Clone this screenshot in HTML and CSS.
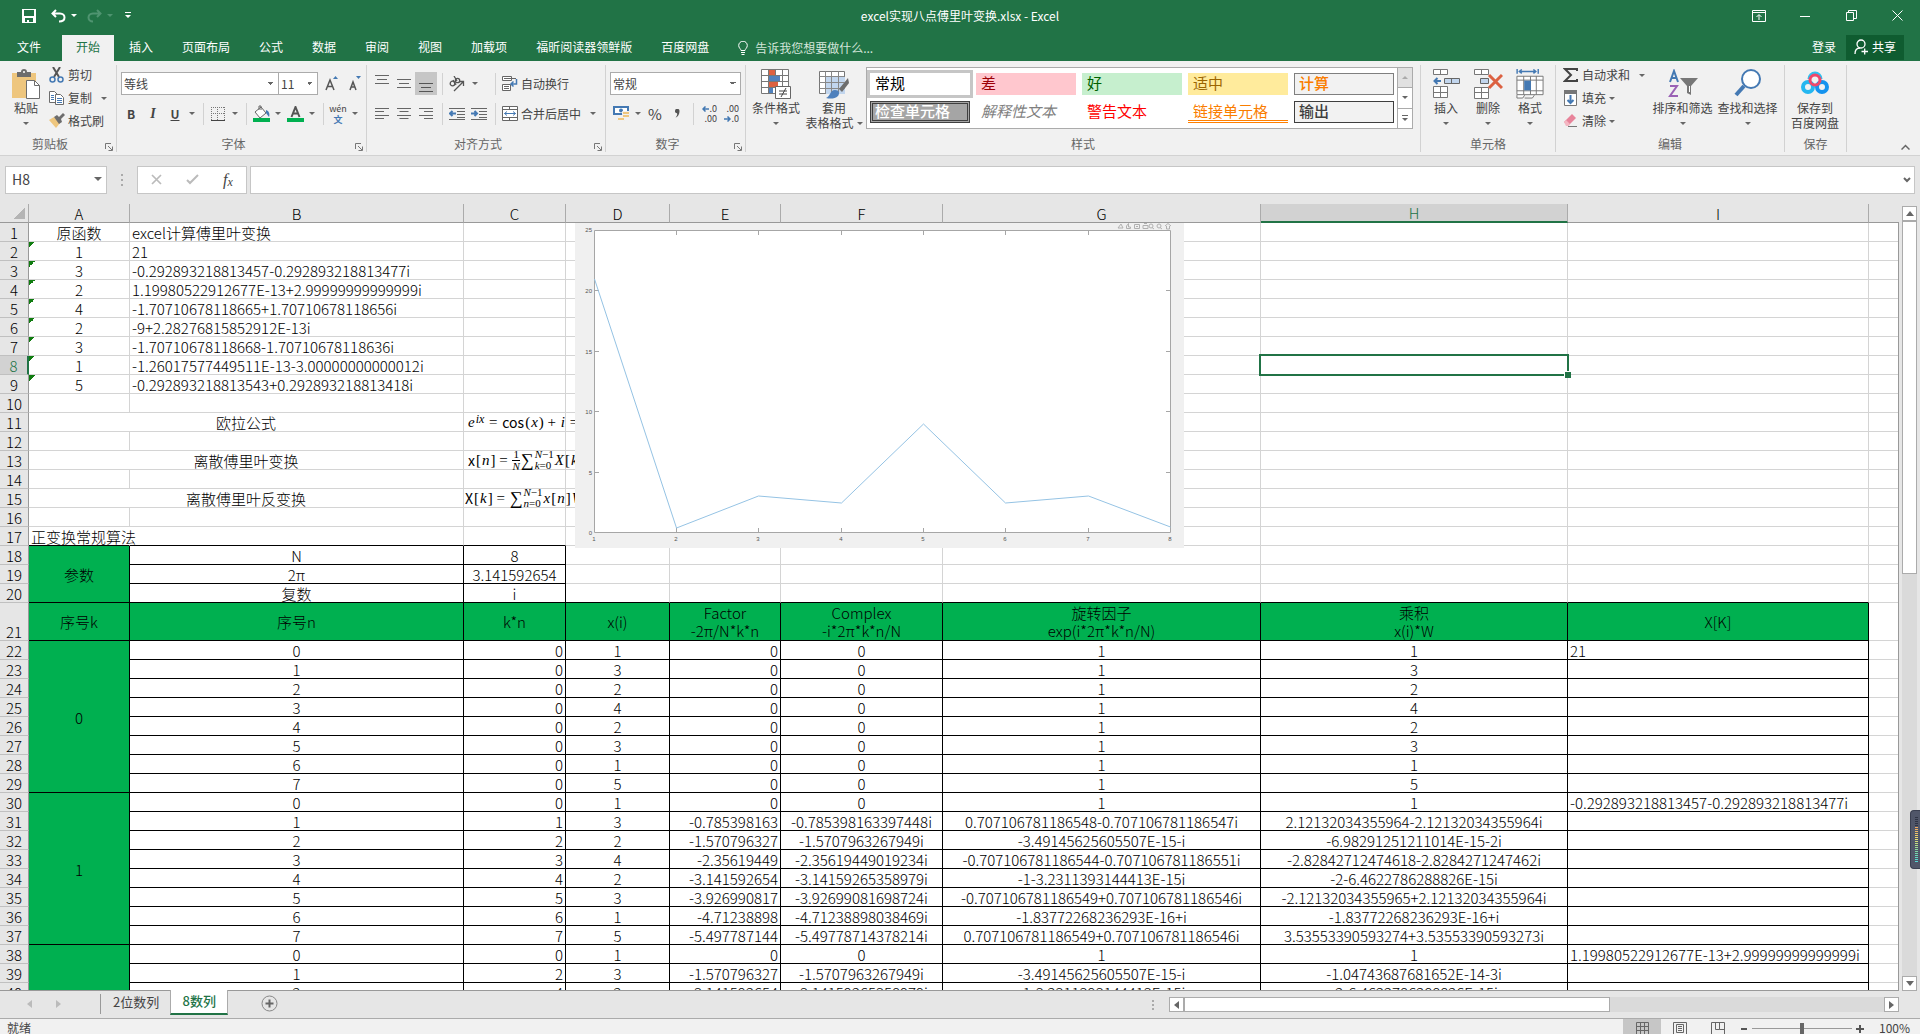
FILE: index.html
```html
<!DOCTYPE html>
<html lang="zh-CN">
<head>
<meta charset="utf-8">
<title>excel实现八点傅里叶变换.xlsx - Excel</title>
<link rel="stylesheet" href="styles.css">
</head>
<body>
<header class="titlebar">
  <div class="quick">
    <button class="q-save" aria-label="保存"><svg width="14" height="14" viewBox="0 0 14 14"><path fill="#fff" fill-rule="evenodd" d="M0 0h14v14H0zM2 1v6h10V1zM3 9v4h2v-2h2v2h4V9z"/></svg></button>
    <button class="q-undo" aria-label="撤销"><svg width="15" height="14" viewBox="0 0 15 14"><path fill="none" stroke="#fff" stroke-width="2" d="M5 1 1.500 4.500 5 8M2 4.500h7c3 0 4.500 2 4.500 4S12 12.500 8 12.500"/></svg><i class="caret light"></i></button>
    <button class="q-redo" aria-label="恢复"><svg width="15" height="14" viewBox="0 0 15 14"><path fill="none" stroke="#4f9470" stroke-width="2" d="m10 1 3.500 3.500L10 8M13 4.500H6c-3 0-4.500 2-4.500 4S3 12.500 6 12.500"/></svg><i class="caret dim"></i></button>
    <button class="q-more" aria-label="自定义"><svg width="6" height="7" viewBox="0 0 6 7"><path fill="#fff" d="M0 0h6v1H0zM0 3h6L3 6z"/></svg></button>
  </div>
  <h1 class="title">excel实现八点傅里叶变换.xlsx - Excel</h1>
  <div class="window">
    <button aria-label="功能区显示选项"><svg width="14" height="12" viewBox="0 0 14 12"><path fill="none" stroke="#fff" d="M.5.5h13v11H.5zM.5 2.500h13M7 10V5M4.500 7 7 4.500 9.500 7"/></svg></button>
    <button aria-label="最小化"><svg width="10" height="12" viewBox="0 0 10 12"><path stroke="#fff" d="M0 6.500h10"/></svg></button>
    <button aria-label="还原"><svg width="11" height="11" viewBox="0 0 11 11"><path fill="none" stroke="#fff" d="M.5 2.500h7v8h-7zM2.500 2.500v-2h8v8h-3"/></svg></button>
    <button aria-label="关闭"><svg width="11" height="11" viewBox="0 0 11 11"><path stroke="#fff" d="m.5.5 10 10M10.500.5l-10 10"/></svg></button>
  </div>
</header>
<nav class="tabs">
  <button class="file">文件</button>
  <button class="active">开始</button>
  <button>插入</button>
  <button>页面布局</button>
  <button>公式</button>
  <button>数据</button>
  <button>审阅</button>
  <button>视图</button>
  <button>加载项</button>
  <button>福昕阅读器领鲜版</button>
  <button>百度网盘</button>
  <button class="tell"><svg width="10" height="14" viewBox="0 0 10 14"><path fill="none" stroke="#fff" d="M3 9.500C3 8 .7 7 .7 4.500a4.300 4.300 0 0 1 8.600 0C9.300 7 7 8 7 9.500zM3 11.500h4M3.500 13.500h3"/></svg>告诉我您想要做什么...</button>
  <button class="login">登录</button>
  <button class="share"><svg width="14" height="16" viewBox="0 0 14 16"><circle cx="7" cy="5" r="4" fill="none" stroke="#fff" stroke-width="1.300"/><path fill="none" stroke="#fff" stroke-width="1.300" d="M1 15c0-4 2-6 5-6M7.500 12.500H14M10.700 9.500v6"/></svg>共享</button>
</nav>

<section class="ribbon" aria-label="开始">
  <div class="group clipboard">
    <div class="body">
      <button class="big"><svg width="30" height="30" viewBox="0 0 30 30"><path fill="#eec67e" d="M1 4h24v25H1z"/><path fill="#6d6d6d" d="M6 3h4a3 3 0 0 1 6 0h4v5H6z"/><circle cx="13" cy="3" r="1" fill="#fff"/><path fill="#fff" stroke="#6d6d6d" d="M15.500 11.500h8l5 5v13h-13z"/><path fill="none" stroke="#6d6d6d" d="M23.500 11.500v5h5"/></svg><span>粘贴</span><i class="caret"></i></button>
      <div class="list">
        <button><svg width="16" height="16" viewBox="0 0 16 16"><path fill="none" stroke="#555" stroke-width="2" d="m4 0 6 10M11 0 5 10"/><circle cx="3.500" cy="12.500" r="2.500" fill="none" stroke="#4479b3" stroke-width="1.500"/><circle cx="11.500" cy="12.500" r="2.500" fill="none" stroke="#4479b3" stroke-width="1.500"/></svg>剪切</button>
        <button><svg width="16" height="16" viewBox="0 0 16 16"><path fill="#fff" stroke="#6d6d6d" d="M.5 1.500h5l3 3v8h-8z"/><path fill="#fff" stroke="#6d6d6d" d="M6.500 4.500h5l3 3v7h-8z"/><path stroke="#4479b3" d="M2 5.500h3M2 7.500h3M2 9.500h3M8 8.500h5M8 10.500h5M8 12.500h5"/></svg>复制<i class="caret gap"></i></button>
        <button><svg width="16" height="16" viewBox="0 0 16 16"><path fill="#eec67e" d="m0 7 5-3 6 6-4 5z"/><path fill="#6d6d6d" d="m5 4 3-2 2 2 4-4 2 2-4 4 1 3-3 2z"/></svg>格式刷</button>
      </div>
    </div>
    <div class="label"><span>剪贴板</span><svg class="launch" width="8" height="8" viewBox="0 0 8 8"><path fill="none" stroke="#777" d="M.5 6V.5H6M3 3l4 4M7.500 3.500v4h-4"/></svg></div>
  </div>

  <div class="group font">
    <div class="body rows">
      <div class="row">
        <select class="combo w157" aria-label="字体"><option>等线</option></select>
        <select class="combo w40" aria-label="字号"><option>11</option></select>
        <button class="tool wide"><svg width="13" height="15" viewBox="0 0 13 15"><path fill="none" stroke="#555" stroke-width="1.500" d="m1 14 4-10 4 10M2.500 10.500h5"/><path fill="#4479b3" d="m8 3 2.500-3L13 3z"/></svg></button>
        <button class="tool"><svg width="12" height="15" viewBox="0 0 12 15"><path fill="none" stroke="#555" stroke-width="1.500" d="m1 14 3-8 3 8M2 11h4"/><path fill="#4479b3" d="M7 0h5L9.500 3z"/></svg></button>
      </div>
      <div class="row">
        <button class="tool"><b>B</b></button><button class="tool"><b class="it">I</b></button><button class="tool"><b class="un">U</b></button><button class="drop" aria-label="下划线"><i class="caret"></i></button><i class="sep"></i>
        <button class="tool"><svg width="14" height="14" viewBox="0 0 14 14"><path stroke="#777" stroke-dasharray="1 1" d="M0 .5h14M0 6.500h14M.5 0v13M6.500 0v13M13.500 0v13"/><path stroke="#444" d="M0 13.500h14"/></svg></button><button class="drop" aria-label="边框"><i class="caret"></i></button><i class="sep"></i>
        <button class="tool"><svg width="17" height="17" viewBox="0 0 17 17"><path fill="#fff" stroke="#666" d="m2 7 6-5 5 6-6 5zM6 5V1h2v4"/><path fill="#4479b3" d="M13 5c3 1 4 4 3 7-1-1-2-3-3-4z"/><path fill="#00b050" d="M0 13h17v4H0z"/></svg></button><button class="drop" aria-label="填充颜色"><i class="caret"></i></button>
        <button class="tool"><svg width="17" height="16" viewBox="0 0 17 16"><path fill="none" stroke="#555" stroke-width="2" d="m4.500 11 4-10 4 10M6 7.500h5"/><path fill="#00b050" d="M0 12h17v4H0z"/></svg></button><button class="drop" aria-label="字体颜色"><i class="caret"></i></button><i class="sep"></i>
        <button class="tool wen"><span>wén</span><em>文</em></button><button class="drop" aria-label="拼音"><i class="caret"></i></button>
      </div>
    </div>
    <div class="label"><span>字体</span><svg class="launch" width="8" height="8" viewBox="0 0 8 8"><path fill="none" stroke="#777" d="M.5 6V.5H6M3 3l4 4M7.500 3.500v4h-4"/></svg></div>
  </div>

  <div class="group align">
    <div class="body rows">
      <div class="row">
        <button class="tool"><svg width="14" height="17" viewBox="0 0 14 17"><path stroke="#666" d="M0 .5h14M2 4.500h10M0 8.500h14"/></svg></button><button class="tool"><svg width="14" height="17" viewBox="0 0 14 17"><path stroke="#666" d="M0 4.500h14M2 8.500h10M0 12.500h14"/></svg></button><button class="tool on"><svg width="14" height="17" viewBox="0 0 14 17"><path stroke="#555" d="M0 8.500h14M2 12.500h10M0 16.500h14"/></svg></button><i class="sep"></i>
        <button class="tool"><svg width="16" height="16" viewBox="0 0 16 16"><circle cx="3.500" cy="7.500" r="2.300" fill="none" stroke="#555" stroke-width="1.300"/><circle cx="8.500" cy="4.500" r="2.200" fill="none" stroke="#555" stroke-width="1.300"/><path fill="none" stroke="#555" stroke-width="1.300" d="m4 4 3 5M5 0l3 5M5 15l9-9M14.500 10V5.500H10"/></svg></button><button class="drop wide" aria-label="方向"><i class="caret"></i></button><i class="sep"></i>
        <button class="text"><svg width="16" height="15" viewBox="0 0 16 15"><path fill="#fff" stroke="#666" d="M.5.5h9v4h-9zM.5 8.500h8v6h-8z"/><path stroke="#666" d="M2 2.500h12M2 10.500h5M2 12.500h5"/><path fill="none" stroke="#4479b3" stroke-width="1.500" d="M14.500 3v5h-5M11.500 5.500 9 8l2.500 2.500"/></svg>自动换行</button>
      </div>
      <div class="row">
        <button class="tool"><svg width="14" height="13" viewBox="0 0 14 13"><path stroke="#666" d="M0 1.500h14M0 4.500h9M0 8.500h14M0 11.500h9"/></svg></button><button class="tool"><svg width="14" height="13" viewBox="0 0 14 13"><path stroke="#666" d="M0 1.500h14M2.500 4.500h9M0 8.500h14M2.500 11.500h9"/></svg></button><button class="tool"><svg width="14" height="13" viewBox="0 0 14 13"><path stroke="#666" d="M0 1.500h14M5 4.500h9M0 8.500h14M5 11.500h9"/></svg></button><i class="sep"></i>
        <button class="tool"><svg width="16" height="14" viewBox="0 0 16 14"><path stroke="#666" d="M0 1.500h16M8 4.500h8M8 7.500h8M8 10.500h8M0 12.500h16"/><path fill="none" stroke="#4479b3" stroke-width="2" d="M7 6.500H1M3.500 4 1 6.500 3.500 9"/></svg></button><button class="tool"><svg width="16" height="14" viewBox="0 0 16 14"><path stroke="#666" d="M0 1.500h16M8 4.500h8M8 7.500h8M8 10.500h8M0 12.500h16"/><path fill="none" stroke="#4479b3" stroke-width="2" d="M0 6.500h6M3.500 4 6 6.500 3.500 9"/></svg></button><i class="sep"></i>
        <button class="text"><svg width="16" height="15" viewBox="0 0 16 15"><path fill="#fff" stroke="#666" d="M.5.5h15v14H.5zM.5 3.500h15M.5 11.500h15M7.500.5v3M7.500 11.500v3"/><path fill="none" stroke="#4479b3" d="M2.500 7.500h11M5 5.500l-2.500 2L5 9.500M11 5.500l2.500 2-2.500 2"/></svg>合并后居中<i class="caret gap"></i></button>
      </div>
    </div>
    <div class="label"><span>对齐方式</span><svg class="launch" width="8" height="8" viewBox="0 0 8 8"><path fill="none" stroke="#777" d="M.5 6V.5H6M3 3l4 4M7.500 3.500v4h-4"/></svg></div>
  </div>

  <div class="group number">
    <div class="body rows">
      <div class="row"><select class="combo w131" aria-label="数字格式"><option>常规</option></select></div>
      <div class="row">
        <button class="tool"><svg width="17" height="16" viewBox="0 0 17 16"><path fill="#4479b3" d="M0 0h16v9H0z"/><path fill="#fff" d="M2 2h12v5H2z"/><circle cx="8" cy="4.500" r="2" fill="#4479b3"/><path fill="#eec67e" stroke="#f1f1f1" d="M9.500 5.500h7v3h-7zM9.500 8.500h7v3h-7zM4.500 11.500h7v3h-7z"/></svg></button><button class="drop" aria-label="会计格式"><i class="caret"></i></button>
        <button class="tool pct">%</button><button class="tool"><svg width="5" height="9" viewBox="0 0 5 9"><path fill="#555" d="M0 2a2.200 2.200 0 1 1 4.500 0C4.500 5 3 8 .5 8.500 2 7 2.500 5.500 2 4.200A2 2 0 0 1 0 2z"/></svg></button><i class="sep"></i>
        <button class="tool dec"><span><svg width="7" height="6" viewBox="0 0 7 6"><path fill="none" stroke="#4479b3" stroke-width="1.500" d="M7 3H1M3.500.5 1 3l2.500 2.500"/></svg>.0</span><span>.00</span></button>
        <button class="tool dec"><span>.00</span><span><svg width="7" height="6" viewBox="0 0 7 6"><path fill="none" stroke="#4479b3" stroke-width="1.500" d="M0 3h6M3.500.5 6 3 3.500 5.500"/></svg>.0</span></button>
      </div>
    </div>
    <div class="label"><span>数字</span><svg class="launch" width="8" height="8" viewBox="0 0 8 8"><path fill="none" stroke="#777" d="M.5 6V.5H6M3 3l4 4M7.500 3.500v4h-4"/></svg></div>
  </div>

  <div class="group styles">
    <div class="body">
      <button class="big w56"><svg width="30" height="30" viewBox="0 0 30 30"><path fill="#fff" stroke="#777" d="M.5.500h27v24H.500zM.5 6.500h27M.5 12.500h27M.5 18.500h27M7.500.5v24M14.500.5v24M21.500.5v24"/><path fill="#dc6141" d="M8 1h6v5H8zM8 13h9v5H8z"/><path fill="#4f81bd" d="M8 7h11v5H8zM8 19h4v5H8z"/><path fill="#fff" stroke="#666" d="M14.500 17.500h15v12h-15z"/><path stroke="#444" d="M18 22h8M18 25h8M25 19l-5 9"/></svg><span>条件格式</span><i class="caret"></i></button>
      <button class="big w60"><svg width="30" height="30" viewBox="0 0 30 30"><path fill="#fff" stroke="#777" d="M.5 2.500h25v22H.500z"/><path fill="#c2d6ee" d="M7 8h19v17H7z"/><path stroke="#888" fill="none" d="M.5 7.500h25M.5 13.500h25M.5 19.500h25M6.500 2.500v22M12.500 2.500v22M19.500 2.500v22"/><path fill="#6d6d6d" d="m29 9 1 5-7 9-3-3z"/><path fill="#4f81bd" d="M7 29c4-1 4-8 9-8 4 0 5 3 3 6-3 3-8 3-12 2z"/></svg><span>套用</span><span class="second">表格格式<i class="caret"></i></span></button>
      <div class="gallery">
        <div class="swatches">
          <button class="s-normal">常规</button><button class="s-bad">差</button><button class="s-good">好</button><button class="s-neutral">适中</button><button class="s-calc">计算</button>
          <button class="s-check">检查单元格</button><button class="s-explain">解释性文本</button><button class="s-warn">警告文本</button><button class="s-link">链接单元格</button><button class="s-output">输出</button>
        </div>
        <div class="spin"><button class="off" aria-label="上"><i class="caret up"></i></button><button aria-label="下"><i class="caret"></i></button><button class="more" aria-label="更多"><i class="caret"></i></button></div>
      </div>
    </div>
    <div class="label"><span>样式</span></div>
  </div>

  <div class="group cells">
    <div class="body">
      <button class="big w42"><svg width="27" height="30" viewBox="0 0 27 30"><path fill="#fff" stroke="#777" d="M.5.500h14v5H.5zM7.500.5v5M.5 17.500h14v11H.5zM.5 23.500h14M7.500 17.500v11"/><path fill="#c2d6ee" stroke="#666" d="M11.500 9.500h15v5h-15zM18.500 9.500v5"/><path fill="none" stroke="#4479b3" stroke-width="2" d="M8 12H2M4.500 9 1.500 12l3 3"/></svg><span>插入</span><i class="caret"></i></button>
      <button class="big w42"><svg width="29" height="30" viewBox="0 0 29 30"><path fill="#fff" stroke="#777" d="M.5.500h14v5H.5zM7.500.5v5M.5 18.500h14v11H.5zM.5 23.500h14M7.500 18.500v11"/><path fill="#c2d6ee" stroke="#666" d="M6.500 9.500h8v5h-8z"/><path stroke="#dc6141" stroke-width="3" d="m15 6 13 13M28 6 15 19"/></svg><span>删除</span><i class="caret"></i></button>
      <button class="big w42"><svg width="28" height="31" viewBox="0 0 28 31"><path fill="none" stroke="#4479b3" stroke-width="1.500" d="M.7 0v5M22.500 0v5M3 2.500h17M5.500.5l-2.500 2 2.500 2M17.500.5l2.500 2-2.500 2"/><path fill="#fff" stroke="#777" d="M.5 7.500h27v19H.500zM.5 11.500h27M.5 22.500h27M7.500 7.500v19M14.500 7.500v19M20.500 7.500v19M.5 27v3h6l2-3M8.500 30h8l2-3"/><path fill="#4479b3" d="M8 12h7v10H8z"/></svg><span>格式</span><i class="caret"></i></button>
    </div>
    <div class="label"><span>单元格</span></div>
  </div>

  <div class="group edit">
    <div class="body">
      <div class="list">
        <button><svg width="16" height="16" viewBox="0 0 16 16"><path fill="none" stroke="#444" stroke-width="2" d="M14 4V2H2l6 6-6 6h12v-2"/></svg>自动求和<i class="caret gap"></i></button>
        <button><svg width="16" height="16" viewBox="0 0 16 16"><path fill="#fff" stroke="#777" d="M1.500.5h12v15h-12z"/><path fill="#777" d="M1 0h13v4H1z"/><path fill="none" stroke="#4479b3" stroke-width="2" d="M7.500 5v8M4.500 10l3 3 3-3"/></svg>填充<i class="caret"></i></button>
        <button><svg width="16" height="16" viewBox="0 0 16 16"><path fill="#e8839a" d="m1 9 8-8 4 4-8 8z"/><path fill="#f4b6c2" d="m1 9 2-2 4 4-2 2H3z"/><path stroke="#777" d="M5 13.500h9"/></svg>清除<i class="caret"></i></button>
      </div>
      <button class="big w65"><svg width="30" height="30" viewBox="0 0 30 30"><path fill="none" stroke="#4479b3" stroke-width="2" d="m2 13 4-11 4 11M3.500 9h5"/><path fill="none" stroke="#9a62b5" stroke-width="2" d="M2 17h7L2 27h8"/><path fill="#777" d="M12 9h18l-7 8v9l-4-2v-7z"/><path stroke="#fff" d="M21.500 17v6"/></svg><span>排序和筛选</span><i class="caret"></i></button>
      <button class="big w65"><svg width="30" height="30" viewBox="0 0 30 30"><circle cx="18" cy="10" r="9" fill="#fff" stroke="#4479b3" stroke-width="2"/><path stroke="#4479b3" stroke-width="4" d="m11 17-8 9"/></svg><span>查找和选择</span><i class="caret"></i></button>
    </div>
    <div class="label"><span>编辑</span></div>
  </div>

  <div class="group save">
    <div class="body">
      <button class="big w60"><svg width="28" height="30" viewBox="0 0 28 30"><circle cx="7" cy="18" r="5" fill="none" stroke="#25b7f0" stroke-width="4"/><circle cx="21" cy="18" r="5" fill="none" stroke="#1593ee" stroke-width="4"/><path fill="none" stroke="#2fc0f0" stroke-width="3" d="M8 10a6 6 0 0 1 12 0"/><circle cx="14" cy="11" r="5" fill="none" stroke="#f0476a" stroke-width="3"/></svg><span>保存到</span><span class="second">百度网盘</span></button>
    </div>
    <div class="label"><span>保存</span></div>
  </div>
  <button class="collapse" aria-label="折叠功能区"><svg width="9" height="6" viewBox="0 0 9 6"><path fill="none" stroke="#666" stroke-width="1.500" d="m.5 5.500 4-4 4 4"/></svg></button>
</section>

<section class="formula-bar">
  <div class="namebox"><input value="H8" aria-label="名称框"><i class="caret big-caret"></i></div>
  <svg class="grip" width="2" height="12" viewBox="0 0 2 12"><path fill="#aaa" d="M0 0h2v2H0zM0 5h2v2H0zM0 10h2v2H0z"/></svg>
  <div class="fx">
    <button aria-label="取消"><svg width="11" height="11" viewBox="0 0 11 11"><path stroke="#bbb" stroke-width="1.700" d="m1 1 9 9M10 1l-9 9"/></svg></button>
    <button aria-label="输入"><svg width="13" height="11" viewBox="0 0 13 11"><path fill="none" stroke="#bbb" stroke-width="2" d="m1 6 3 3 8-8"/></svg></button>
    <button class="fn">f<small>x</small></button>
  </div>
  <div class="content"><input aria-label="编辑栏"><svg width="8" height="6" viewBox="0 0 8 6"><path fill="none" stroke="#666" stroke-width="2" d="m1 1 3 3 3-3"/></svg></div>
</section>

<main class="workspace">
  <div class="sheet">
    <table class="grid">
      <colgroup><col class="c0"><col class="cA"><col class="cB"><col class="cC"><col class="cD"><col class="cE"><col class="cF"><col class="cG"><col class="cH"><col class="cI"><col></colgroup>
      <thead><tr><th class="corner"></th><th>A</th><th>B</th><th>C</th><th>D</th><th>E</th><th>F</th><th>G</th><th class="sel">H</th><th>I</th><th></th></tr></thead>
      <tbody>
      <tr><th>1</th><td class="c">原函数</td><td>excel计算傅里叶变换</td><td></td><td></td><td></td><td></td><td></td><td></td><td></td><td></td></tr>
      <tr><th>2</th><td class="c err">1</td><td>21</td><td></td><td></td><td></td><td></td><td></td><td></td><td></td><td></td></tr>
      <tr><th>3</th><td class="c err">3</td><td>-0.292893218813457-0.292893218813477i</td><td></td><td></td><td></td><td></td><td></td><td></td><td></td><td></td></tr>
      <tr><th>4</th><td class="c err">2</td><td>1.19980522912677E-13+2.99999999999999i</td><td></td><td></td><td></td><td></td><td></td><td></td><td></td><td></td></tr>
      <tr><th>5</th><td class="c err">4</td><td>-1.70710678118665+1.70710678118656i</td><td></td><td></td><td></td><td></td><td></td><td></td><td></td><td></td></tr>
      <tr><th>6</th><td class="c err">2</td><td>-9+2.28276815852912E-13i</td><td></td><td></td><td></td><td></td><td></td><td></td><td></td><td></td></tr>
      <tr><th>7</th><td class="c err">3</td><td>-1.70710678118668-1.70710678118636i</td><td></td><td></td><td></td><td></td><td></td><td></td><td></td><td></td></tr>
      <tr><th class="sel">8</th><td class="c err">1</td><td>-1.26017577449511E-13-3.00000000000012i</td><td></td><td></td><td></td><td></td><td></td><td class="cursor"></td><td></td><td></td></tr>
      <tr><th>9</th><td class="c err">5</td><td>-0.292893218813543+0.292893218813418i</td><td></td><td></td><td></td><td></td><td></td><td></td><td></td><td></td></tr>
      <tr><th>10</th><td></td><td></td><td></td><td></td><td></td><td></td><td></td><td></td><td></td><td></td></tr>
      <tr><th>11</th><td class="c" colspan="2">欧拉公式</td><td class="host"><div class="math"><i>e</i><sup><i>ix</i></sup> = <span class="up">cos</span>(<i>x</i>) + <i>i</i> =</div></td><td></td><td></td><td></td><td></td><td></td><td></td><td></td></tr>
      <tr><th>12</th><td></td><td></td><td></td><td></td><td></td><td></td><td></td><td></td><td></td><td></td></tr>
      <tr><th>13</th><td class="c" colspan="2">离散傅里叶变换</td><td class="host"><div class="math"><span class="up">x</span>[<i>n</i>] = <span class="frac"><span>1</span><span><i>N</i></span></span><span class="sum">∑</span><span class="lim"><span><i>N</i>−1</span><span><i>k</i>=0</span></span><i>X</i>[<i>k</i></div></td><td></td><td></td><td></td><td></td><td></td><td></td><td></td></tr>
      <tr><th>14</th><td></td><td></td><td></td><td></td><td></td><td></td><td></td><td></td><td></td><td></td></tr>
      <tr><th>15</th><td class="c" colspan="2">离散傅里叶反变换</td><td class="host"><div class="math flush"><span class="up">X</span>[<i>k</i>] = <span class="sum">∑</span><span class="lim"><span><i>N</i>−1</span><span><i>n</i>=0</span></span><i>x</i>[<i>n</i>]<i>W</i></div></td><td></td><td></td><td></td><td></td><td></td><td></td><td></td></tr>
      <tr><th>16</th><td></td><td></td><td></td><td></td><td></td><td></td><td></td><td></td><td></td><td></td></tr>
      <tr class="edge"><th>17</th><td class="spill">正变换常规算法</td><td></td><td></td><td></td><td></td><td></td><td></td><td></td><td></td><td></td></tr>
      <tr class="param"><th>18</th><td class="g" rowspan="3">参数</td><td class="k">N</td><td class="k">8</td><td></td><td></td><td></td><td></td><td></td><td></td><td></td></tr>
      <tr class="param"><th>19</th><td class="k">2π</td><td class="k">3.141592654</td><td></td><td></td><td></td><td></td><td></td><td></td><td></td></tr>
      <tr class="param last"><th>20</th><td class="k">复数</td><td class="k">i</td><td></td><td></td><td></td><td></td><td></td><td></td><td></td></tr>
      <tr class="head"><th>21</th><td>序号k</td><td>序号n</td><td>k*n</td><td>x(i)</td><td>Factor<br>-2π/N*k*n</td><td>Complex<br>-i*2π*k*n/N</td><td>旋转因子<br>exp(i*2π*k*n/N)</td><td>乘积<br>x(i)*W</td><td>X[K]</td><td></td></tr>
      <tr class="d"><th>22</th><td class="g" rowspan="8">0</td><td>0</td><td class="r">0</td><td>1</td><td class="r">0</td><td>0</td><td>1</td><td>1</td><td class="l">21</td><td></td></tr>
      <tr class="d"><th>23</th><td>1</td><td class="r">0</td><td>3</td><td class="r">0</td><td>0</td><td>1</td><td>3</td><td></td><td></td></tr>
      <tr class="d"><th>24</th><td>2</td><td class="r">0</td><td>2</td><td class="r">0</td><td>0</td><td>1</td><td>2</td><td></td><td></td></tr>
      <tr class="d"><th>25</th><td>3</td><td class="r">0</td><td>4</td><td class="r">0</td><td>0</td><td>1</td><td>4</td><td></td><td></td></tr>
      <tr class="d"><th>26</th><td>4</td><td class="r">0</td><td>2</td><td class="r">0</td><td>0</td><td>1</td><td>2</td><td></td><td></td></tr>
      <tr class="d"><th>27</th><td>5</td><td class="r">0</td><td>3</td><td class="r">0</td><td>0</td><td>1</td><td>3</td><td></td><td></td></tr>
      <tr class="d"><th>28</th><td>6</td><td class="r">0</td><td>1</td><td class="r">0</td><td>0</td><td>1</td><td>1</td><td></td><td></td></tr>
      <tr class="d"><th>29</th><td>7</td><td class="r">0</td><td>5</td><td class="r">0</td><td>0</td><td>1</td><td>5</td><td></td><td></td></tr>
      <tr class="d"><th>30</th><td class="g" rowspan="8">1</td><td>0</td><td class="r">0</td><td>1</td><td class="r">0</td><td>0</td><td>1</td><td>1</td><td class="l">-0.292893218813457-0.292893218813477i</td><td></td></tr>
      <tr class="d"><th>31</th><td>1</td><td class="r">1</td><td>3</td><td class="r">-0.785398163</td><td>-0.785398163397448i</td><td>0.707106781186548-0.707106781186547i</td><td>2.12132034355964-2.12132034355964i</td><td></td><td></td></tr>
      <tr class="d"><th>32</th><td>2</td><td class="r">2</td><td>2</td><td class="r">-1.570796327</td><td>-1.5707963267949i</td><td>-3.49145625605507E-15-i</td><td>-6.98291251211014E-15-2i</td><td></td><td></td></tr>
      <tr class="d"><th>33</th><td>3</td><td class="r">3</td><td>4</td><td class="r">-2.35619449</td><td>-2.35619449019234i</td><td>-0.707106781186544-0.707106781186551i</td><td>-2.82842712474618-2.8284271247462i</td><td></td><td></td></tr>
      <tr class="d"><th>34</th><td>4</td><td class="r">4</td><td>2</td><td class="r">-3.141592654</td><td>-3.14159265358979i</td><td>-1-3.2311393144413E-15i</td><td>-2-6.4622786288826E-15i</td><td></td><td></td></tr>
      <tr class="d"><th>35</th><td>5</td><td class="r">5</td><td>3</td><td class="r">-3.926990817</td><td>-3.92699081698724i</td><td>-0.707106781186549+0.707106781186546i</td><td>-2.12132034355965+2.12132034355964i</td><td></td><td></td></tr>
      <tr class="d"><th>36</th><td>6</td><td class="r">6</td><td>1</td><td class="r">-4.71238898</td><td>-4.71238898038469i</td><td>-1.83772268236293E-16+i</td><td>-1.83772268236293E-16+i</td><td></td><td></td></tr>
      <tr class="d"><th>37</th><td>7</td><td class="r">7</td><td>5</td><td class="r">-5.497787144</td><td>-5.49778714378214i</td><td>0.707106781186549+0.707106781186546i</td><td>3.53553390593274+3.53553390593273i</td><td></td><td></td></tr>
      <tr class="d"><th>38</th><td class="g" rowspan="3"></td><td>0</td><td class="r">0</td><td>1</td><td class="r">0</td><td>0</td><td>1</td><td>1</td><td class="l">1.19980522912677E-13+2.99999999999999i</td><td></td></tr>
      <tr class="d"><th>39</th><td>1</td><td class="r">2</td><td>3</td><td class="r">-1.570796327</td><td>-1.5707963267949i</td><td>-3.49145625605507E-15-i</td><td>-1.04743687681652E-14-3i</td><td></td><td></td></tr>
      <tr class="d"><th>40</th><td>2</td><td class="r">4</td><td>2</td><td class="r">-3.141592654</td><td>-3.14159265358979i</td><td>-1-3.2311393144413E-15i</td><td>-2-6.4622786288826E-15i</td><td></td><td></td></tr>
      </tbody>
    </table>
    <svg class="chart" width="609" height="325" viewBox="0 0 609 325" role="img" aria-label="折线图">
      <path fill="#f0f0f0" d="M0 0h609v325H0z"/>
      <path fill="#fff" stroke="#a6a6a6" d="M19.500 7.500h576v302h-576z"/>
      <path stroke="#a6a6a6" d="M101.500 7v5M183.500 7v5M266.500 7v5M348.500 7v5M430.500 7v5M513.500 7v5M101.500 310v-5M183.500 310v-5M266.500 310v-5M348.500 310v-5M430.500 310v-5M513.500 310v-5M19 67.500h5M19 128.500h5M19 188.500h5M19 249.500h5M596 67.500h-5M596 128.500h-5M596 188.500h-5M596 249.500h-5"/>
      <path fill="none" stroke="#95c3e4" d="m19.500 56 82 249 82-32 83 7 82-79 82 79 83-7 82 31"/>
      <g class="ylab"><text x="17" y="9">25</text><text x="17" y="70">20</text><text x="17" y="131">15</text><text x="17" y="191">10</text><text x="17" y="252">5</text><text x="17" y="312">0</text></g>
      <g class="xlab"><text x="19" y="318">1</text><text x="101" y="318">2</text><text x="183" y="318">3</text><text x="266" y="318">4</text><text x="348" y="318">5</text><text x="430" y="318">6</text><text x="513" y="318">7</text><text x="595" y="318">8</text></g>
      <path fill="none" stroke="#b0b0b0" d="m543 5 3-4 2 4zM551.500 5.500V3l2-2.500V4h2v1.500zM559.500 1.500h5v4h-5zM561 3.500h2M568 2.500h5v3h-5zM569 .5h3M585 4.500l2 1.500M577 4.500l2 1.500M590 3l3-2.500L596 3M591.500 3v3h3V3"/><circle cx="576" cy="3" r="2" fill="none" stroke="#b0b0b0"/><circle cx="584" cy="3" r="2" fill="none" stroke="#b0b0b0"/>
    </svg>
  </div>
  <div class="vscroll"><button aria-label="向上"><i class="tri up"></i></button><div class="vthumb"></div><button class="end" aria-label="向下"><i class="tri"></i></button></div>
  <div class="meter"><i></i></div>
</main>

<footer class="sheetbar">
  <button class="nav" aria-label="上一个"><svg width="5" height="8" viewBox="0 0 5 8"><path fill="#bbb" d="M5 0v8L0 4z"/></svg></button>
  <button class="nav" aria-label="下一个"><svg width="5" height="8" viewBox="0 0 5 8"><path fill="#bbb" d="M0 0v8l5-4z"/></svg></button>
  <button class="tab first">2位数列</button>
  <button class="tab current">8数列</button>
  <button class="add" aria-label="新工作表"><svg width="17" height="17" viewBox="0 0 17 17"><circle cx="8.500" cy="8.500" r="7.500" fill="none" stroke="#888"/><path stroke="#666" stroke-width="2" d="M4.500 8.500h8M8.500 4.500v8"/></svg></button>
  <svg class="dots" width="2" height="10" viewBox="0 0 2 10"><path fill="#aaa" d="M0 0h2v2H0zM0 4h2v2H0zM0 8h2v2H0z"/></svg>
  <div class="hscroll"><button aria-label="向左"><i class="tri left"></i></button><div class="hthumb"></div><button class="end" aria-label="向右"><i class="tri right"></i></button></div>
</footer>
<div class="status">
  <span class="ready">就绪</span>
  <button class="view on" aria-label="普通"><svg width="13" height="13" viewBox="0 0 13 13"><path fill="none" stroke="#666" d="M.5.5h12v12H.5zM.5 4.500h12M.5 8.500h12M4.500.5v12M8.500.5v12"/></svg></button>
  <button class="view" aria-label="页面布局"><svg width="14" height="13" viewBox="0 0 14 13"><path fill="none" stroke="#666" d="M.5.5h13v12H.5zM3.500 2.500h7v8h-7zM5 4.500h4M5 6.500h4M5 8.500h4"/></svg></button>
  <button class="view" aria-label="分页预览"><svg width="14" height="13" viewBox="0 0 14 13"><path fill="none" stroke="#666" d="M.5 13V.5h13V13M4.500.5v7h4v-7M8.500 7.500h5"/></svg></button>
  <button class="zoom-btn" aria-label="缩小"><svg width="6" height="12" viewBox="0 0 6 12"><path fill="#555" d="M0 5h6v2H0z"/></svg></button>
  <input class="zoom" type="range" min="0" max="100" value="50" aria-label="缩放">
  <button class="zoom-btn" aria-label="放大"><svg width="8" height="12" viewBox="0 0 8 12"><path fill="#555" d="M0 5h8v2H0zM3 2h2v8H3z"/></svg></button>
  <span class="pct-label">100%</span>
</div>
</body>
</html>
```

FILE: styles.css
```css
* { box-sizing: border-box; }

body {
  margin: 0;
  height: 100vh;
  overflow: hidden;
  display: flex;
  flex-direction: column;
  font: 12px/16px "Noto Sans CJK SC", "Liberation Sans", sans-serif;
  color: #444;
  background: #e6e6e6;
}

button, input, select { font: inherit; color: inherit; margin: 0; }
button {
  padding: 0;
  border: 0;
  background: none;
  display: flex;
  align-items: center;
  justify-content: center;
  white-space: nowrap;
}
svg { display: block; flex: none; }

.caret {
  flex: none;
  width: 0;
  height: 0;
  border: 3px solid transparent;
  border-top-color: #666;
  border-bottom: 0;
}
.caret.up { border-bottom: 3px solid #aaa; border-top: 0; }
.caret.light { border-top-color: #fff; }
.caret.dim { border-top-color: #4f9470; }
.gap { margin-left: 6px; }

/* title bar */
.titlebar {
  display: grid;
  grid-template-columns: 1fr auto 1fr;
  align-items: center;
  height: 35px;
  flex: none;
  padding-bottom: 4px;
  background: #217346;
  color: #fff;
}
.quick { display: flex; padding-left: 22px; }
.quick button { gap: 5px; }
.q-undo { margin-left: 15px; }
.q-redo { margin-left: 10px; }
.q-more { margin-left: 12px; }
.title { margin: 0; font-size: 12px; font-weight: 400; }
.window { display: flex; justify-content: flex-end; }
.window button { width: 46px; }

/* ribbon tabs */
.tabs {
  display: flex;
  gap: 1px;
  height: 26px;
  flex: none;
  background: #217346;
  color: #fff;
}
.tabs button { padding: 0 14px 2px; }
.tabs .file { width: 61px; padding: 0 20px 2px 17px; }
.tabs .active { background: #f1f1f1; color: #217346; }
.tabs .tell { gap: 7px; padding-bottom: 0; color: #d3e5da; }
.tabs .login { margin-left: auto; padding: 0 9px 2px; }
.tabs .share { width: 58px; height: 25px; padding: 0 0 2px; gap: 4px; margin-right: 16px; background: #0f5c30; }

/* ribbon */
.ribbon {
  display: flex;
  flex: none;
  height: 95px;
  padding-top: 4px;
  border-bottom: 1px solid #d2d2d2;
  background: #f1f1f1;
}
.group {
  flex: none;
  display: flex;
  flex-direction: column;
  height: 87px;
  border-right: 1px solid #d2d2d2;
}
.body { display: flex; height: 71px; }
.label { display: flex; align-items: center; height: 16px; color: #666; }
.label span { flex: 1; text-align: center; }
.launch { margin: 5px 3px 0 5px; }

.clipboard { width: 117px; }
.font { width: 250px; }
.align { width: 239px; }
.number { width: 140px; }
.styles { width: 675px; }
.cells { width: 135px; }
.edit { width: 229px; }
.save { width: 62px; }
.clipboard .body { padding-left: 10px; gap: 7px; }
.font .body { padding-left: 3px; }
.align .body, .number .body, .cells .body { padding-left: 4px; }
.styles .body { padding-left: 2px; }
.edit .body { padding-left: 7px; }

.big {
  flex: none;
  flex-direction: column;
  justify-content: flex-start;
  height: 71px;
  padding-top: 4px;
  min-width: 32px;
}
.big svg { height: 30px; }
.big span { line-height: 16px; margin-top: 1px; }
.big > .caret { margin-top: 6px; }
.big .second { display: flex; align-items: center; gap: 3px; margin-top: -1px; }
.w42 { width: 42px; }
.w56 { width: 56px; }
.w60 { width: 60px; }
.w65 { width: 65px; }

.list { display: flex; flex-direction: column; }
.list button { height: 23px; gap: 3px; padding-bottom: 3px; justify-content: flex-start; }
.edit .list { width: 87px; }

.rows { flex-direction: column; padding-top: 7px; gap: 7px; }
.row { display: flex; height: 23px; align-items: center; }
.combo {
  appearance: none;
  height: 23px;
  padding: 0 2px;
  border: 1px solid #ababab;
  border-radius: 0;
  background:
    linear-gradient(45deg, transparent 50%, #666 50%) right 7px center / 3px 3px no-repeat,
    linear-gradient(-45deg, transparent 50%, #666 50%) right 4px center / 3px 3px no-repeat,
    #fff;
}
.w157 { width: 158px; }
.font .combo:first-child { margin-left: 1px; }
.w40 { width: 40px; margin-left: -1px; }
.w131 { width: 131px; }
.tool { flex: none; width: 22px; height: 23px; }
.tool.wide { width: 26px; }
.tool.on { background: #c6c6c6; }
.drop { flex: none; width: 12px; height: 23px; }
.drop.wide { width: 22px; padding-right: 8px; }
.sep { width: 1px; height: 22px; margin: 0 3px 0 5px; background: #d2d2d2; }
.it { font-family: "Liberation Serif", serif; font-style: italic; font-size: 14px; }
.un { text-decoration: underline; }
.wen { flex-direction: column; line-height: 11px; font-size: 9px; }
.wen em { font-style: normal; line-height: 11px; color: #4479b3; font-weight: 700; }
.pct { font-size: 15px; }
.dec { flex-direction: column; font-size: 9px; line-height: 10px; align-items: center; }
.dec span { display: flex; align-items: center; justify-content: flex-end; width: 18px; height: 10px; gap: 1px; }
.text { gap: 3px; padding-left: 3px; height: 23px; }

.gallery {
  display: flex;
  width: 547px;
  height: 62px;
  margin: 2px 0 0 2px;
  border: 1px solid #ababab;
  background: #fff;
}
.swatches {
  flex: 1;
  display: grid;
  grid-template-columns: repeat(5, 100px);
  grid-template-rows: 22px 22px;
  gap: 6px;
  padding: 5px 3px;
}
.swatches button { justify-content: flex-start; padding: 0 0 2px 5px; font-size: 15px; line-height: 18px; }
.s-normal { outline: 3px solid #c6c6c6; color: #000; }
.s-bad { background: #ffc7ce; color: #9c0006; }
.s-good { background: #c6efce; color: #006100; }
.s-neutral { background: #ffeb9c; color: #9c6500; }
.swatches .s-calc { background: #f2f2f2; color: #fa7d00; border: 1px solid #7f7f7f; font-weight: 500; padding-left: 4px; }
.swatches .s-check { background: #a5a5a5; color: #fff; border: 3px double #3f3f3f; font-weight: 500; padding-left: 2px; }
.s-explain { color: #7f7f7f; font-style: italic; }
.s-warn { color: #f00; }
.swatches .s-link { color: #fa7d00; border-bottom: 3px double #ff8001; padding-bottom: 0; }
.swatches .s-output { background: #f2f2f2; color: #3f3f3f; border: 1px solid #3f3f3f; font-weight: 500; padding-left: 4px; }
.spin { width: 16px; display: flex; flex-direction: column; border-left: 1px solid #ababab; }
.spin button { flex: 1; }
.spin button + button { border-top: 1px solid #ababab; }
.spin .off { background: #e1e1e1; }
.spin .more { flex-direction: column; gap: 2px; }
.spin .more::before { content: ""; width: 6px; height: 1px; background: #666; }
.collapse { margin-left: auto; margin-right: 10px; align-self: flex-end; height: 17px; }

/* formula bar */
.formula-bar { display: flex; flex: none; height: 48px; padding: 10px 5px; }
.namebox, .fx, .content {
  display: flex;
  align-items: center;
  height: 28px;
  border: 1px solid #c6c6c6;
  background: #fff;
}
.namebox { width: 102px; padding: 0 4px 2px 6px; }
.namebox input, .content input { flex: 1; min-width: 0; border: 0; padding: 0; background: none; outline: 0; font-size: 14px; }
.big-caret { border-width: 4px; border-bottom: 0; }
.grip { margin: 8px 14px 0; }
.fx { width: 110px; padding-bottom: 1px; }
.fx button { flex: 1; }
.fn { font: italic 16px/16px "Liberation Serif", serif; }
.fn small { font-size: 12px; padding-top: 4px; }
.content { flex: 1; margin-left: 3px; padding: 0 3px; }

/* worksheet */
.workspace { position: relative; display: flex; flex: 1; min-height: 0; }
.sheet {
  position: relative;
  flex: 1;
  min-width: 0;
  overflow: hidden;
  border-bottom: 1px solid #999;
}
.sheet::after {
  content: "";
  position: absolute;
  inset: 18px 0 0 auto;
  width: 1px;
  background: #999;
}
.grid {
  width: 100%;
  table-layout: fixed;
  border-collapse: separate;
  border-spacing: 0;
  font-size: 15px;
  line-height: 16px;
  font-weight: 300;
  color: #000;
}
.c0 { width: 29px; }
.cA { width: 101px; }
.cB { width: 334px; }
.cC { width: 102px; }
.cD { width: 104px; }
.cE { width: 111px; }
.cF { width: 162px; }
.cG { width: 318px; }
.cH { width: 307px; }
.cI { width: 301px; }
.grid th, .grid td {
  height: 19px;
  padding: 2px 0 0;
  border: solid #d4d4d4;
  border-width: 0 1px 1px 0;
  white-space: nowrap;
}
.grid th { background: #e6e6e6; font-weight: 300; border-color: #ababab; vertical-align: bottom; }
.grid thead th { border-bottom-color: #999; }
.grid thead th:last-child { border-right: 0; }
.grid tbody th { border-right-color: #999; border-bottom-color: #c0c0c0; }
.grid .corner {
  background: linear-gradient(135deg, transparent 50%, #b4b4b4 50%) right 3px bottom 3px / 11px 11px no-repeat #e6e6e6;
}
.grid th.sel { background: #d2d2d2; color: #217346; }
.grid thead th.sel { border-bottom: 2px solid #217346; padding-top: 1px; }
.grid tbody th.sel { border-right: 2px solid #217346; }
.grid td { background: #fff; padding: 2px 2px 0; }
.grid .c { text-align: center; }
.grid .err { background: linear-gradient(135deg, #107c10 50%, transparent 50%) 0 0 / 6px 6px no-repeat #fff; }
.grid .cursor { position: relative; }
.cursor::before {
  content: "";
  position: absolute;
  inset: -2px;
  border: 2px solid #217346;
}
.cursor::after {
  content: "";
  position: absolute;
  right: -4px;
  bottom: -4px;
  width: 6px;
  height: 6px;
  background: #217346;
  border: solid #fff;
  border-width: 1px 0 0 1px;
}
.grid .spill { position: relative; border-right-color: #fff; }
.grid .edge td:nth-child(-n+4), .grid .k { border-bottom-color: #000; }
.grid .k, .grid .g, .grid .head td, .grid .d td { text-align: center; border-color: #000; }
.grid .last td { border-bottom-color: #000; }
.grid .g, .grid .head td { background: #00b050; }
.grid .head td { height: 38px; line-height: 18px; padding-top: 1px; }
.grid tr td:last-child { background: #fff; border-color: #d4d4d4; border-right: 0; }
.grid .d .r { text-align: right; }
.grid .d .l { text-align: left; }

/* equation boxes float over the cells */
.host { position: relative; }
.math {
  position: absolute;
  inset: 0 auto 0 4px;
  display: flex;
  align-items: center;
  gap: 0 1px;
  white-space: pre;
  font: 15px/18px "Liberation Serif", serif;
}
.math.flush { left: 1px; }
.math sup { font-size: 12px; line-height: 12px; align-self: flex-start; }
.math .up { font-family: "Noto Sans CJK SC", sans-serif; font-size: 14px; }
.math .frac, .math .lim { display: flex; flex-direction: column; font-size: 11px; line-height: 11px; }
.math .frac { text-align: center; }
.math .frac span:first-child { border-bottom: 1px solid #000; }
.math .sum { font-size: 18px; }

.chart { position: absolute; left: 575px; top: 19px; }
.chart text { font: 6px "Liberation Sans", sans-serif; fill: #555; }
.ylab { text-anchor: end; }
.xlab { text-anchor: middle; }

.tri { width: 0; height: 0; border: 4px solid transparent; border-top: 5px solid #666; border-bottom: 0; }
.tri.up { border-top: 0; border-bottom: 5px solid #666; }
.tri.left { border: 4px solid transparent; border-left: 0; border-right: 5px solid #666; }
.tri.right { border: 4px solid transparent; border-right: 0; border-left: 5px solid #666; }
.vscroll {
  flex: none;
  display: flex;
  flex-direction: column;
  width: 15px;
  margin: 2px 3px 0 3px;
  background: #dadada;
}
.vscroll button, .hscroll button { flex: none; width: 15px; height: 15px; background: #fff; border: 1px solid #ababab; }
.vthumb { height: 45%; background: #fff; border: 1px solid #ababab; }
.vscroll .end { margin-top: auto; }
.meter {
  position: absolute;
  right: 0;
  bottom: 122px;
  width: 10px;
  height: 59px;
  padding: 6px 2px 6px 4px;
  border-radius: 4px 0 0 4px;
  border: 1px solid #3a3f50;
  border-right: 0;
  background: #505669;
}
.meter i {
  display: block;
  height: 45px;
  background:
    repeating-linear-gradient(transparent 0 1px, #505669 1px 2px),
    linear-gradient(#2e3344 22%, #f0a860 23%, #e8e070 50%, #80d8a0 75%, #50d8d8);
}

/* sheet tabs */
.sheetbar { display: flex; flex: none; height: 28px; border-bottom: 1px solid #ababab; }
.nav { width: 29px; height: 25px; }
.nav:first-child { margin-left: 15px; }
.tab { height: 24px; font-size: 13px; }
.tab.first { height: 20px; margin: 3px 0 0 27px; padding: 0 11px 5px 12px; border-left: 1px solid #999; }
.tab.current {
  width: 58px;
  margin-top: -1px;
  height: 25px;
  padding-bottom: 1px;
  position: relative;
  background: #fff;
  color: #217346;
  font-weight: 500;
  border: solid #ababab;
  border-width: 0 1px;
  border-bottom: 2px solid #217346;
}
.add { margin-left: 33px; height: 25px; }
.dots { margin: 9px 15px 0 auto; }
.hscroll { display: flex; width: 730px; height: 15px; margin: 6px 21px 0 0; background: #dadada; }
.hthumb { width: 426px; background: #fff; border: 1px solid #ababab; }
.hscroll .end { margin-left: auto; }

/* status bar */
.status {
  display: flex;
  align-items: flex-start;
  flex: none;
  height: 15px;
  overflow: hidden;
  background: #f1f1f1;
  line-height: 17px;
}
.ready { margin-left: 7px; margin-right: auto; }
.view { width: 38px; height: 18px; padding-top: 1px; }
.view.on { background: #c6c6c6; }
.zoom-btn { height: 19px; width: 8px; }
.view + .zoom-btn { margin-left: 3px; }
.zoom { appearance: none; width: 100px; height: 19px; margin: 0 4px; background: linear-gradient(#999, #999) center / 100% 1px no-repeat; }
.zoom::-webkit-slider-thumb { appearance: none; width: 4px; height: 12px; background: #666; }
.pct-label { width: 32px; margin: 0 9px 0 15px; }
```
